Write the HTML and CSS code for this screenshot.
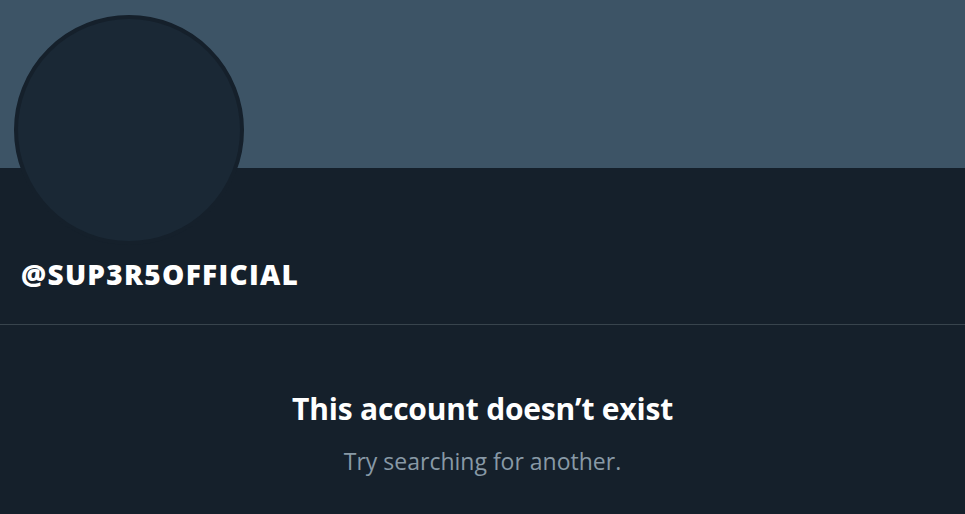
FILE: index.html
```html
<!DOCTYPE html>
<html lang="en">
<head>
<meta charset="utf-8">
<title>@SUP3R5OFFICIAL</title>
<link rel="stylesheet" href="styles.css">
</head>
<body>
<main class="profile">
  <div class="banner"></div>
  <section class="info">
    <div class="avatar"></div>
    <h1 class="handle">@SUP3R5OFFICIAL</h1>
  </section>
  <section class="empty">
    <h2 class="empty-title">This account doesn’t exist</h2>
    <p class="empty-text">Try searching for another.</p>
  </section>
</main>
</body>
</html>
```
FILE: styles.css
```css
html, body {
  margin: 0;
  padding: 0;
  background: #15202b;
  height: 100%;
  overflow: hidden;
}
body {
  font-family: "Open Sans", "Noto Sans", sans-serif;
  color: #ffffff;
}
.profile {
  display: flex;
  flex-direction: column;
}
.banner {
  height: 168px;
  background: #3d5466;
}
.info {
  padding: 0 0 0 14px;
  border-bottom: 1px solid #38444d;
  height: 156px;
}
.avatar {
  width: 222px;
  height: 222px;
  margin-top: -153px;
  border-radius: 50%;
  background: #1a2835;
  border: 4px solid #15202b;
}
.handle {
  margin: 11px 0 0 7px;
  font-size: 28px;
  line-height: 36px;
  font-weight: 800;
  letter-spacing: 1.3px;
}
.empty {
  display: flex;
  flex-direction: column;
  align-items: center;
  padding-top: 65px;
}
.empty-title {
  margin: 0;
  font-size: 30px;
  line-height: 38px;
  font-weight: 700;
  letter-spacing: -0.2px;
}
.empty-text {
  margin: 18px 0 0;
  font-size: 23px;
  line-height: 30px;
  color: #8899a6;
}
```
